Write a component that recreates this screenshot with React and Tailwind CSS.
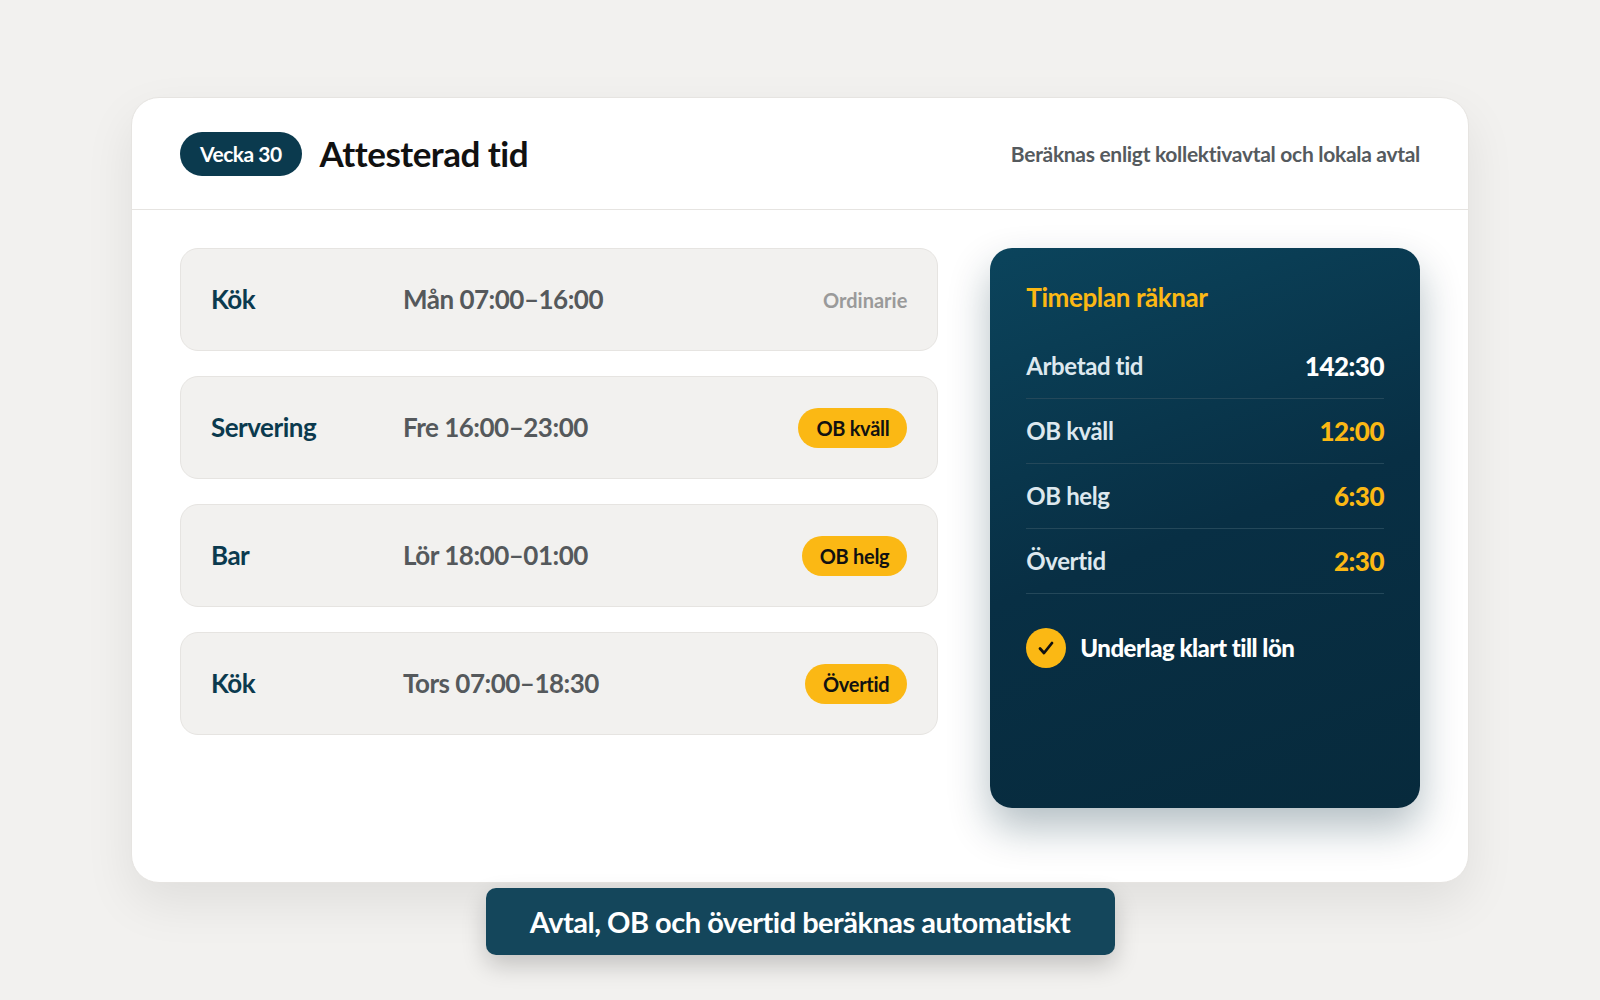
import React from "react";

const rows = [
  { a: "Kök", t: "Mån 07:00–16:00", b: "Ordinarie" },
  { a: "Servering", t: "Fre 16:00–23:00", b: "OB kväll", y: true },
  { a: "Bar", t: "Lör 18:00–01:00", b: "OB helg", y: true },
  { a: "Kök", t: "Tors 07:00–18:30", b: "Övertid", y: true },
];
const stats = [
  ["Arbetad tid", "142:30", false],
  ["OB kväll", "12:00", true],
  ["OB helg", "6:30", true],
  ["Övertid", "2:30", true],
];

export default function App() {
  return (
    <div className="w-[1600px] h-[1000px] bg-[#f2f1ef] flex flex-col items-center pt-[97px]" style={{ fontFamily: "Lato, 'Noto Sans', sans-serif" }}>
      <div className="w-[1338px] h-[786px] bg-white rounded-[28px] border border-[#e6e4e1] shadow-[0_20px_50px_rgba(0,0,0,0.08)] flex flex-col">
        <div className="h-[112px] border-b border-[#e6e4e1] flex items-center px-[48px]">
          <div className="bg-[#0b3a4e] text-white text-[21px] font-bold rounded-full h-[44px] px-[20px] flex items-center tracking-[-0.5px]">Vecka 30</div>
          <div className="ml-[18px] text-[35px] font-bold text-[#111] tracking-[-0.5px]">Attesterad tid</div>
          <div className="ml-auto text-[21px] font-bold text-[#555a5e] tracking-[-0.3px]">Beräknas enligt kollektivavtal och lokala avtal</div>
        </div>
        <div className="flex px-[48px] pt-[38px] gap-[52px]">
          <div className="w-[759px] flex flex-col gap-[25px]">
            {rows.map((r, i) => (
              <div key={i} className="h-[103px] bg-[#f2f1ef] border border-[#e6e4e1] rounded-[18px] flex items-center px-[30px]">
                <div className="w-[192px] text-[26px] font-bold text-[#0b3a4e] tracking-[-0.5px]">{r.a}</div>
                <div className="text-[26px] font-bold text-[#55595c] tracking-[-0.5px]">{r.t}</div>
                <div className="ml-auto">
                  {r.y ? (
                    <span className="bg-[#fbb814] text-[#111] text-[20px] font-bold rounded-full h-[40px] px-[18px] flex items-center tracking-[-0.3px]">{r.b}</span>
                  ) : (
                    <span className="text-[20px] font-bold text-[#9a9a9a]">{r.b}</span>
                  )}
                </div>
              </div>
            ))}
          </div>
          <div className="w-[430px] h-[560px] rounded-[22px] bg-[linear-gradient(160deg,#0b445c_0%,#082f44_50%,#072a3c_100%)] shadow-[0_20px_40px_rgba(7,42,60,0.3)] px-[36px] pt-[30px]">
            <div className="text-[26px] font-bold text-[#fbb814] tracking-[-0.4px]">Timeplan räknar</div>
            <div className="mt-[17px]">
              {stats.map(([l, v, y]) => (
                <div key={l} className="h-[65px] border-b border-[#24485a] flex items-center justify-between">
                  <span className="text-[24px] font-bold text-[#dde8ee] tracking-[-0.4px]">{l}</span>
                  <span className={"text-[26px] font-black tracking-[-0.5px] " + (y ? "text-[#fbb814]" : "text-white")}>{v}</span>
                </div>
              ))}
            </div>
            <div className="flex items-center mt-[34px] gap-[14px]">
              <div className="w-[40px] h-[40px] rounded-full bg-[#fbb814] flex items-center justify-center">
                <svg width="20" height="20" viewBox="0 0 20 20"><path d="M4 10.5l4 4.5 8-10" stroke="#111" strokeWidth="2.8" fill="none" strokeLinecap="round" strokeLinejoin="round" /></svg>
              </div>
              <span className="text-[24px] font-black text-white tracking-[-0.5px]">Underlag klart till lön</span>
            </div>
          </div>
        </div>
      </div>
      <div className="mt-[5px] w-[629px] h-[67px] bg-[#14465b] rounded-[10px] shadow-[0_10px_24px_rgba(0,0,0,0.2)] flex items-center justify-center text-white text-[29px] font-bold tracking-[-0.5px]">
        Avtal, OB och övertid beräknas automatiskt
      </div>
    </div>
  );
}
